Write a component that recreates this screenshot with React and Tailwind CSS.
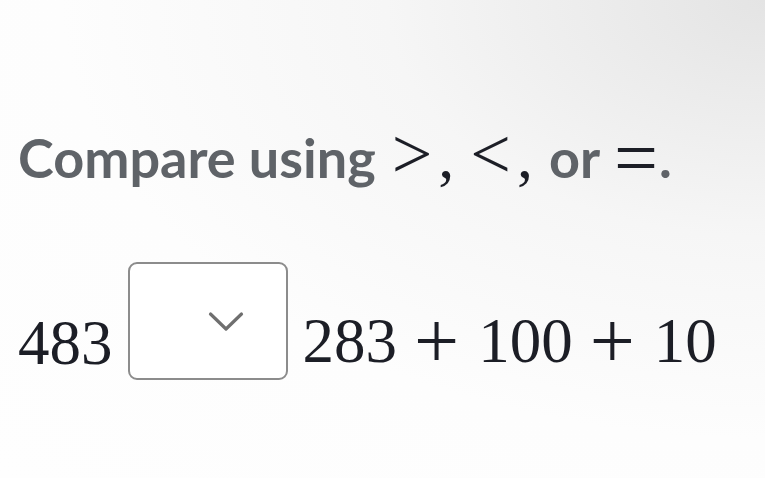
import React from 'react';

const mathFont = { fontFamily: '"Liberation Serif", "DejaVu Serif", serif' };

function Chevron() {
    return (
        <svg width="36" height="21" viewBox="0 0 36 21" fill="none" className="block">
            <path d="M2.5 3 L18 18 L33.5 3" stroke="#6f6f6f" strokeWidth="3.2" strokeLinecap="round" strokeLinejoin="round" />
        </svg>
    );
}

export default function App() {
    return (
        <div className="w-[765px] h-[478px] overflow-hidden bg-[radial-gradient(ellipse_at_100%_0%,#e4e4e4_0%,#f6f6f6_35%,#fdfdfd_65%,#fefefe_100%)]">
            <div className="flex flex-col pl-[18px] pt-[113px]">
                {/* prompt */}
                <div className="flex items-baseline leading-none text-[54px] font-bold text-[#5f6368]" style={{ fontFamily: 'Lato, "Noto Sans", sans-serif' }}>
                    <span>Compare using</span>
                    <span className="ml-[16px] text-[#1c1e26] font-normal text-[72px]" style={mathFont}>&gt;</span>
                    <span className="text-[#1c1e26] font-normal text-[64px] ml-[6px]" style={mathFont}>,</span>
                    <span className="ml-[16px] text-[#1c1e26] font-normal text-[72px]" style={mathFont}>&lt;</span>
                    <span className="text-[#1c1e26] font-normal text-[64px] ml-[6px]" style={mathFont}>,</span>
                    <span className="ml-[16px]">or</span>
                    <span className="ml-[14px] text-[#1c1e26] font-normal text-[78px] translate-y-[6px]" style={mathFont}>=</span>
                    <span className="ml-[1px]">.</span>
                </div>

                {/* equation */}
                <div className="flex items-end mt-[71px] text-[#1c1e26]" style={mathFont}>
                    <span className="mb-[5px] text-[63px] leading-none">483</span>
                    <div className="ml-[15px] w-[160px] h-[118px] shrink-0 rounded-[9px] border-2 border-[#8c8c8c] bg-white flex items-start justify-end pr-[42px] pt-[47px]">
                        <Chevron />
                    </div>
                    <div className="flex items-baseline leading-none mb-[5px] ml-[15px] text-[63px]">
                        <span>283</span>
                        <span className="ml-[17px] text-[80px] translate-y-[6px]">+</span>
                        <span className="ml-[19px]">100</span>
                        <span className="ml-[17px] text-[80px] translate-y-[6px]">+</span>
                        <span className="ml-[19px]">10</span>
                    </div>
                </div>
            </div>
        </div>
    );
}
